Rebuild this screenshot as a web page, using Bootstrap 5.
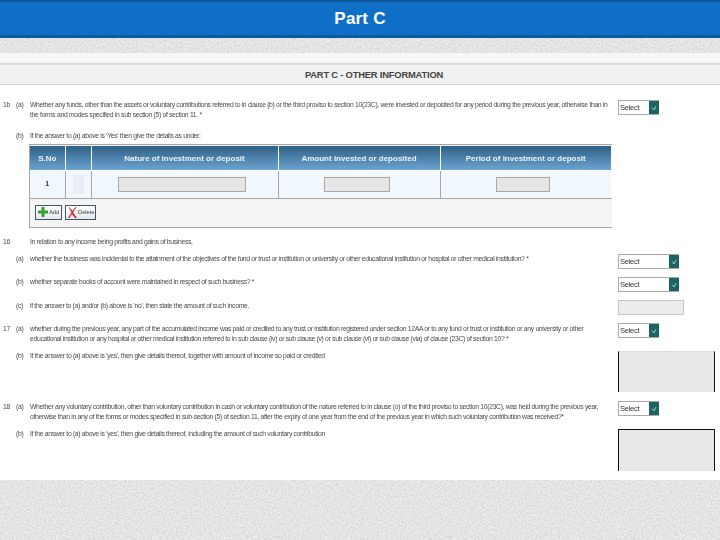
<!DOCTYPE html>
<html lang="en">
<head>
<meta charset="utf-8">
<title>Part C</title>
<link href="https://cdn.jsdelivr.net/npm/bootstrap@5.3.0/dist/css/bootstrap.min.css" rel="stylesheet">
<style>
html,body{margin:0;height:540px;overflow:hidden;background:#fff;font-family:"Liberation Sans",Arial,sans-serif}
.top-bar{height:38px;background:#0f6fc6;border-top:2px solid #0b5496;border-bottom:3px solid #0b5a9e;color:#fff;font-size:17px;font-weight:700;line-height:33px;text-align:center;letter-spacing:.2px}
.grain{display:block;width:720px}
.grain-top{height:15px}
.grain-bottom{height:60px}
.sheet{height:427px;overflow:hidden;background:#fff}
.gap-strip{height:10px;background:#f7f7f7}
.part-head{height:22px;margin-bottom:14px;background:#f1f1f1;border-top:2px solid #dcdcdc;border-bottom:1px solid #d4d4d4;color:#444;font-size:9.4px;font-weight:700;letter-spacing:-.2px;line-height:19px;text-align:center;padding-left:28px}
.q-row{display:flex;color:#4a4a4a;font-size:6.8px;letter-spacing:-.32px;line-height:10px;white-space:nowrap;filter:blur(.25px)}
.q-num{width:13px;margin-left:3px}
.q-let{width:14px}
.q-text{width:588px}
.ctl-drop{margin-top:1px}
.h-a{height:32px}
.h-b{height:13px}
.h-16{height:13px;margin-top:9px}
.h-16a{height:23px;margin-top:3px}
.h-16b{height:24px}
.h-16c{height:23px}
.h-17a{height:27px}
.h-17b{height:51px}
.h-18a{height:28px}
.h-18b{height:42px}
.tx-down{padding-top:1px}
.fake-select{display:flex;justify-content:space-between;height:15px;background:#fff;border:1px solid #aaa;border-right:0;color:#333;font-size:7.6px;letter-spacing:-.3px;line-height:14px;padding-left:1px}
.sel-s{width:41px}
.sel-l{width:61px}
.sel-arrow{display:flex;align-items:center;justify-content:center;width:10px;background:#1c6461}
.fake-input{width:66px;height:15px;background:#ececec;border:1px solid #c4c4c4}
.fake-area{width:97px;height:41px;background:#e8e8e8;border-left:1px solid #111;border-right:1px solid #111}
.area-top{height:42px;border-top:1px solid #111}
.area-soft{border-top:1px solid #ddd}
.table-wrap{width:583px;margin:0 0 0 29px;background:#f4f4f4;border:1px solid #a5a5a5;border-right:0;height:84px;padding-top:1px;filter:blur(.2px)}
.inv-table{width:582px;margin:0;border-collapse:collapse;table-layout:fixed}
.inv-table th{height:24px;padding:3px 0 0;background:linear-gradient(#2f5f84,#6ba3cf);border:1px solid #fff;border-top:0;color:#e8f3fb;font-size:8px;font-weight:700;text-align:center;vertical-align:middle}
.inv-table td{height:28px;padding:0;background:#f0f7fd;border:1px solid #fff;border-bottom:1px solid #a5a5a5;border-top:0;color:#333;font-size:7px;font-weight:700;text-align:center;vertical-align:middle}
.inv-table th:first-child,.inv-table td:first-child{border-left:0}
.inv-table .cell-sep{border-right:1px solid #a5a5a5}
.col-sn{width:35px}.col-ck{width:26px}.col-nat{width:187px}.col-amt{width:162px}
.cell-input{display:inline-block;height:15px;background:#e6e6e6;border:1px solid #a8a8a8;vertical-align:middle}
.ci-a{width:128px;margin-right:6px}.ci-b{width:66px;margin-right:4px}.ci-c{width:54px;margin-right:6px}
.cell-check{display:inline-block;width:13px;height:21px;background:#e9eef2;border:1px solid #f4f7f9;vertical-align:middle}
.tool-row{display:flex;gap:3px;padding:6px 0 0 5px}
.tool-btn{display:flex;align-items:center;gap:1px;height:15px;padding:0 1px 0 2px;overflow:hidden;background:linear-gradient(#fff,#e3e8ee);border:1px solid #40566e;border-radius:0;color:#444;font-size:6px;letter-spacing:-.15px;line-height:1}
.tool-btn svg{flex:none}
.btn-add{width:27px}.btn-del{width:31px}
</style>
</head>
<body>
<div class="top-bar">Part C</div>
<svg class="grain grain-top" aria-hidden="true">
  <defs><filter id="noise" x="0" y="0" width="100%" height="100%"><feTurbulence type="fractalNoise" baseFrequency=".55" numOctaves="3" seed="4"/><feColorMatrix values="0 0 0 0 .55 0 0 0 0 .55 0 0 0 0 .55 .7 .7 .7 0 -.85"/></filter></defs>
  <rect width="720" height="15" fill="#ececec"/><rect width="720" height="15" filter="url(#noise)"/>
</svg>
<div class="sheet">
  <div class="gap-strip"></div>
  <div class="part-head">PART C - OTHER INFORMATION</div>

  <div class="q-row h-a">
    <div class="q-num tx-down">1b</div><div class="q-let tx-down">(a)</div>
    <div class="q-text tx-down">Whether any funds, other than the assets or voluntary contributions referred to in clause (b) or the third proviso to section 10(23C), were invested or deposited for any period during the previous year, otherwise than in<br>the forms and modes specified in sub section (5) of section 11. *</div>
    <div class="ctl-drop"><div class="fake-select sel-s">Select<span class="sel-arrow"><svg width="6" height="6" viewBox="0 0 6 6"><path d="M1 2.500 3 5 5 1" fill="none" stroke="#9fd0c4"/></svg></span></div></div>
  </div>
  <div class="q-row h-b">
    <div class="q-num"></div><div class="q-let">(b)</div>
    <div class="q-text">If the answer to (a) above is 'Yes' then give the details as under:</div>
  </div>

  <div class="table-wrap">
    <table class="inv-table">
      <thead><tr><th class="col-sn">S.No</th><th class="col-ck"></th><th class="col-nat">Nature of investment or deposit</th><th class="col-amt">Amount invested or deposited</th><th>Period of investment or deposit</th></tr></thead>
      <tbody><tr><td class="cell-sep">1</td><td class="cell-sep"><span class="cell-check"></span></td><td class="cell-sep"><span class="cell-input ci-a"></span></td><td class="cell-sep"><span class="cell-input ci-b"></span></td><td><span class="cell-input ci-c"></span></td></tr></tbody>
    </table>
    <div class="tool-row">
      <div class="tool-btn btn-add"><svg width="10" height="10" viewBox="0 0 10 10"><path d="M3.500 0h3v3.500H10v3H6.500V10h-3V6.500H0v-3h3.500z" fill="#35a02f"/></svg>Add</div>
      <div class="tool-btn btn-del"><svg width="9" height="11" viewBox="0 0 9 11"><path d="M1 0 4.500 4 7.500 0h1L5 5.500 9 11H7L4 7 1.500 11H0L3.500 5.500.5 0z" fill="#d2232a"/></svg>Delete</div>
    </div>
  </div>

  <div class="q-row h-16">
    <div class="q-num">16</div><div class="q-let"></div>
    <div class="q-text">In relation to any income being profits and gains of business,</div>
  </div>
  <div class="q-row h-16a">
    <div class="q-num"></div><div class="q-let tx-down">(a)</div>
    <div class="q-text tx-down">whether the business was incidental to the attainment of the objectives of the fund or trust or institution or university or other educational institution or hospital or other medical institution? *</div>
    <div class="ctl-drop"><div class="fake-select sel-l">Select<span class="sel-arrow"><svg width="6" height="6" viewBox="0 0 6 6"><path d="M1 2.500 3 5 5 1" fill="none" stroke="#9fd0c4"/></svg></span></div></div>
  </div>
  <div class="q-row h-16b">
    <div class="q-num"></div><div class="q-let tx-down">(b)</div>
    <div class="q-text tx-down">whether separate books of account were maintained in respect of such business? *</div>
    <div class="ctl-drop"><div class="fake-select sel-l">Select<span class="sel-arrow"><svg width="6" height="6" viewBox="0 0 6 6"><path d="M1 2.500 3 5 5 1" fill="none" stroke="#9fd0c4"/></svg></span></div></div>
  </div>
  <div class="q-row h-16c">
    <div class="q-num"></div><div class="q-let tx-down">(c)</div>
    <div class="q-text tx-down">if the answer to (a) and/or (b) above is 'no', then state the amount of such income.</div>
    <div><div class="fake-input"></div></div>
  </div>
  <div class="q-row h-17a">
    <div class="q-num tx-down">17</div><div class="q-let tx-down">(a)</div>
    <div class="q-text tx-down">whether during the previous year, any part of the accumulated income was paid or credited to any trust or institution registered under section 12AA or to any fund or trust or institution or any university or other<br>educational institution or any hospital or other medical institution referred to in sub clause (iv) or sub clause (v) or sub clause (vi) or sub clause (via) of clause (23C) of section 10? *</div>
    <div><div class="fake-select sel-s">Select<span class="sel-arrow"><svg width="6" height="6" viewBox="0 0 6 6"><path d="M1 2.500 3 5 5 1" fill="none" stroke="#9fd0c4"/></svg></span></div></div>
  </div>
  <div class="q-row h-17b">
    <div class="q-num"></div><div class="q-let tx-down">(b)</div>
    <div class="q-text tx-down">If the answer to (a) above is 'yes', then give details thereof, together with amount of income so paid or credited</div>
    <div class="ctl-drop"><div class="fake-area area-soft"></div></div>
  </div>
  <div class="q-row h-18a">
    <div class="q-num tx-down">18</div><div class="q-let tx-down">(a)</div>
    <div class="q-text tx-down">Whether any voluntary contribution, other than voluntary contribution in cash or voluntary contribution of the nature referred to in clause (o) of the third proviso to section 10(23C), was held during the previous year,<br>otherwise than in any of the forms or modes specified in sub-section (5) of section 11, after the expiry of one year from the end of the previous year in which such voluntary contribution was received?*</div>
    <div><div class="fake-select sel-s">Select<span class="sel-arrow"><svg width="6" height="6" viewBox="0 0 6 6"><path d="M1 2.500 3 5 5 1" fill="none" stroke="#9fd0c4"/></svg></span></div></div>
  </div>
  <div class="q-row h-18b">
    <div class="q-num"></div><div class="q-let">(b)</div>
    <div class="q-text">If the answer to (a) above is 'yes', then give details thereof, including the amount of such voluntary contribution</div>
    <div><div class="fake-area area-top"></div></div>
  </div>
</div>
<svg class="grain grain-bottom" aria-hidden="true"><rect width="720" height="60" fill="#ececec"/><rect width="720" height="60" filter="url(#noise)"/></svg>
</body>
</html>
